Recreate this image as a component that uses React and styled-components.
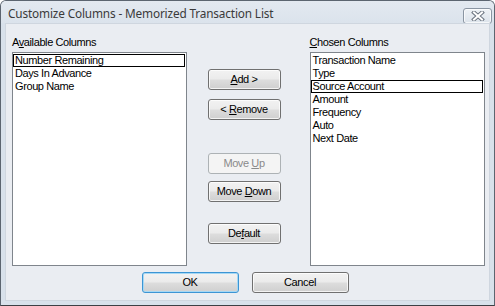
import React from "react";
import styled, { createGlobalStyle, css } from "styled-components";

const Global = createGlobalStyle`
  html, body { margin: 0; padding: 0; background: #ffffff; }
  * { box-sizing: border-box; }
`;

const Window = styled.div`
  width: 495px;
  height: 306px;
  display: flex;
  flex-direction: column;
  background: #d8e1eb;
  border: 1px solid #5c6570;
  border-bottom-color: #3c3f44;
  border-radius: 6px 6px 0 0;
  padding: 0 4px 4px 4px;
  overflow: hidden;
`;

const TitleBar = styled.div`
  height: 22px;
  flex: none;
  display: flex;
  align-items: center;
  justify-content: space-between;
  background: linear-gradient(#e3e9f0, #dbe3ec);
  margin: 0 -4px;
  padding-left: 7px;
  padding-right: 2px;
`;

const Title = styled.span`
  font-family: "Noto Sans", "Open Sans", sans-serif;
  font-size: 11.8px;
  color: #3a3a3a;
  letter-spacing: -0.15px;
  line-height: 1;
  margin-top: 3px;
`;

const CloseButton = styled.div`
  width: 29px;
  height: 16px;
  margin-top: 7px;
  border: 1px solid #8a95a2;
  border-radius: 3px;
  background: linear-gradient(#eef2f6, #dce3eb);
  box-shadow: inset 0 0 0 1px rgba(255, 255, 255, 0.7);
  display: flex;
  align-items: center;
  justify-content: center;
`;

const Body = styled.div`
  flex: 1;
  background: #eaedf2;
  border: 1px solid #cfd6df;
  display: flex;
  flex-direction: column;
  padding: 12px 4px 0 5px;
`;

const Columns = styled.div`
  display: flex;
  align-items: flex-start;
`;

const ListColumn = styled.div`
  width: ${(p) => p.$w}px;
  display: flex;
  flex-direction: column;
  margin-left: ${(p) => p.$ml || 0}px;
`;

const textFont = css`
  font-family: "Liberation Sans", Arial, sans-serif;
  font-size: 11px;
  letter-spacing: -0.4px;
  color: #000;
`;

const Label = styled.div`
  ${textFont}
  line-height: 13px;
  height: 13px;
  margin-bottom: 3px;
`;

const Key = styled.span`
  text-decoration: underline;
  text-underline-offset: 1px;
`;

const ListBox = styled.div`
  height: 214px;
  background: #ffffff;
  border: 1px solid #7f858c;
  padding-top: 1px;
  display: flex;
  flex-direction: column;
`;

const Item = styled.div`
  ${textFont}
  height: 13px;
  line-height: 11px;
  padding-left: 1px;
  margin-right: 1px;
  border: 1px solid transparent;
  ${(p) =>
    p.$focus &&
    css`
      border-color: #000;
    `}
`;

const ButtonColumn = styled.div`
  width: 73px;
  margin-left: 21px;
  padding-top: 33px;
  display: flex;
  flex-direction: column;
`;

const Button = styled.button`
  ${textFont}
  width: ${(p) => p.$w || 73}px;
  height: 21px;
  margin: 0;
  margin-top: ${(p) => p.$mt || 0}px;
  padding: 0 0 1px 0;
  border: 1px solid #707070;
  border-radius: 3px;
  background: linear-gradient(#f2f2f2 0%, #ebebeb 48%, #dddddd 52%, #cfcfcf 100%);
  box-shadow: inset 0 0 0 1px rgba(255, 255, 255, 0.75);
  cursor: default;
  ${(p) =>
    p.$default &&
    css`
      border-color: #3c95d4;
      box-shadow: inset 0 0 0 1px #a6d8f4;
    `}
  ${(p) =>
    p.disabled &&
    css`
      color: #8a8a8a;
      border-color: #adb2b5;
      background: #f4f4f4;
      box-shadow: none;
    `}
`;

const Footer = styled.div`
  display: flex;
  justify-content: center;
  gap: 13px;
  margin-top: 6px;
  padding-right: 6px;
`;

const available = ["Number Remaining", "Days In Advance", "Group Name"];
const chosen = [
  "Transaction Name",
  "Type",
  "Source Account",
  "Amount",
  "Frequency",
  "Auto",
  "Next Date",
];

export default function App() {
  return (
    <>
      <Global />
      <Window>
        <TitleBar>
          <Title>Customize Columns - Memorized Transaction List</Title>
          <CloseButton>
            <svg width="14" height="10" viewBox="0 0 14 10">
              <path d="M3 1.5 L11 8.5 M11 1.5 L3 8.5" stroke="#6d7682" strokeWidth="4" strokeLinecap="square" fill="none" />
              <path d="M3 1.5 L11 8.5 M11 1.5 L3 8.5" stroke="#ffffff" strokeWidth="2" strokeLinecap="square" fill="none" />
            </svg>
          </CloseButton>
        </TitleBar>
        <Body>
          <Columns>
            <ListColumn $w={175} $ml={1}>
              <Label>
                A<Key>v</Key>ailable Columns
              </Label>
              <ListBox>
                {available.map((t, i) => (
                  <Item key={t} $focus={i === 0}>
                    {t}
                  </Item>
                ))}
              </ListBox>
            </ListColumn>
            <ButtonColumn>
              <Button>
                <Key>A</Key>dd &gt;
              </Button>
              <Button $mt={9}>
                &lt; <Key>R</Key>emove
              </Button>
              <Button $mt={33} disabled>
                Move <Key>U</Key>p
              </Button>
              <Button $mt={7}>
                Move <Key>D</Key>own
              </Button>
              <Button $mt={21}>
                De<Key>f</Key>ault
              </Button>
            </ButtonColumn>
            <ListColumn $w={176} $ml={29}>
              <Label>
                <Key>C</Key>hosen Columns
              </Label>
              <ListBox>
                {chosen.map((t, i) => (
                  <Item key={t} $focus={i === 2}>
                    {t}
                  </Item>
                ))}
              </ListBox>
            </ListColumn>
          </Columns>
          <Footer>
            <Button $w={97} $default>
              OK
            </Button>
            <Button $w={97}>Cancel</Button>
          </Footer>
        </Body>
      </Window>
    </>
  );
}
